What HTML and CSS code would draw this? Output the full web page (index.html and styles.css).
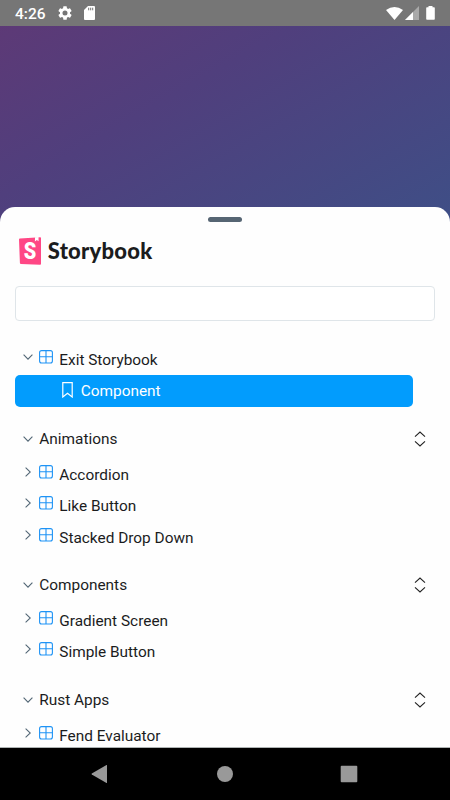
FILE: index.html
```html
<!DOCTYPE html>
<html lang="en">
<head>
    <meta charset="utf-8">
    <title>Storybook</title>
    <link rel="stylesheet" href="styles.css">
</head>
<body>
    <!-- shared icons -->
    <svg class="sprite" width="0" height="0">
        <symbol id="down" viewBox="0 0 10 6"><path d="M.6 .6 5 5.1 9.4 .6"/></symbol>
        <symbol id="right" viewBox="0 0 6 10"><path d="M.6 .6 5.3 5 .6 9.4"/></symbol>
        <symbol id="grid" viewBox="0 0 14 14"><rect x=".6" y=".6" width="12.8" height="12.4" rx="2"/><path d="M7 .6V13M.6 6.7H13.4"/></symbol>
        <symbol id="expand" viewBox="0 0 12 16"><path d="M1 5.7 6 1 11 5.7M1 10.3 6 15 11 10.3"/></symbol>
    </svg>

    <div class="phone">
        <header class="status-bar">
            <span class="clock">4:26</span>
            <svg class="gear" viewBox="2 2 20 20" width="14" height="14"><path d="M19.14 12.94c.04-.3.06-.61.06-.94s-.02-.64-.07-.94l2.03-1.58a.49.49 0 0 0 .12-.61l-1.92-3.32a.49.49 0 0 0-.59-.22l-2.39.96a7 7 0 0 0-1.62-.94l-.36-2.54A.48.48 0 0 0 13.92 2.4h-3.84a.48.48 0 0 0-.47.41l-.36 2.54a7.3 7.3 0 0 0-1.62.94l-2.39-.96a.48.48 0 0 0-.59.22L2.74 8.87a.48.48 0 0 0 .12.61l2.03 1.58a6 6 0 0 0 0 1.88l-2.03 1.58a.49.49 0 0 0-.12.61l1.92 3.32c.12.22.37.29.59.22l2.39-.96c.5.38 1.03.7 1.62.94l.36 2.54c.05.24.24.41.48.41h3.84c.24 0 .44-.17.47-.41l.36-2.54a7 7 0 0 0 1.62-.94l2.39.96c.22.08.47 0 .59-.22l1.92-3.32a.48.48 0 0 0-.12-.61zM12 15.6a3.6 3.6 0 1 1 0-7.2 3.6 3.6 0 0 1 0 7.2z"/></svg>
            <svg class="sd-card" viewBox="0 0 11 14" width="11" height="14"><path d="M4 0h6a1 1 0 0 1 1 1v12a1 1 0 0 1-1 1H1a1 1 0 0 1-1-1V4z"/><path class="pins" d="M4.7 1.7v2.6M6.7 1.7v2.6M8.7 1.7v2.6"/></svg>
            <svg class="wifi" viewBox="0 0 17 13" width="17" height="13"><path d="M0 3Q8.500-3 17 3L8.500 13z"/></svg>
            <svg class="signal" viewBox="0 0 14 14" width="14" height="14"><path class="weak" d="M14 0v14H0z"/><path d="M8 6v8H0z"/></svg>
            <svg class="battery" viewBox="0 0 9 14" width="9" height="14"><path d="M2.500 0h4v1.300H8a.8.8 0 0 1 .8.8V13a.8.8 0 0 1-.8.8H1a.8.8 0 0 1-.8-.8V2.100A.8.8 0 0 1 1 1.300h1.500z"/></svg>
        </header>

        <main class="sheet">
            <div class="handle"></div>
            <div class="brand">
                <svg class="logo" viewBox="0 0 22 28" width="22" height="28">
                    <path class="cover" d="M.9 1.500 21.200.2Q22 .2 22 1V26.800Q22 27.800 21 27.700L2 26.900Q1 26.800.9 25.900L0 2.500Q0 1.600.9 1.500z"/>
                    <path class="ribbon" d="M16 .3 19.500 0 19.600 4.300 17.800 3.100 15.900 4.400z"/>
                    <text class="mark" x="11" y="22" text-anchor="middle" textLength="12.500" lengthAdjust="spacingAndGlyphs">S</text>
                </svg>
                <span class="brand-name">Storybook</span>
            </div>
            <input class="search" type="text">

            <div class="tree">
                <div class="item">
                    <svg class="arrow"><use href="#down" x="0" y="2" width="10" height="6"/></svg>
                    <svg class="grid"><use href="#grid"/></svg>
                    <span>Exit Storybook</span>
                </div>
                <div class="item selected">
                    <svg class="bookmark" viewBox="0 0 11 16" width="11" height="16"><path d="M.8.700H10.200V15L5.500 11.300.8 15z"/></svg>
                    <span>Component</span>
                </div>

                <section class="group">
                    <div class="group-title">
                        <svg class="arrow"><use href="#down" x="0" y="2" width="10" height="6"/></svg>
                        <span>Animations</span>
                        <svg class="expand"><use href="#expand"/></svg>
                    </div>
                    <div class="item">
                        <svg class="arrow"><use href="#right" x="2" y="0" width="6" height="10"/></svg>
                        <svg class="grid"><use href="#grid"/></svg>
                        <span>Accordion</span>
                    </div>
                    <div class="item">
                        <svg class="arrow"><use href="#right" x="2" y="0" width="6" height="10"/></svg>
                        <svg class="grid"><use href="#grid"/></svg>
                        <span>Like Button</span>
                    </div>
                    <div class="item">
                        <svg class="arrow"><use href="#right" x="2" y="0" width="6" height="10"/></svg>
                        <svg class="grid"><use href="#grid"/></svg>
                        <span>Stacked Drop Down</span>
                    </div>
                </section>

                <section class="group">
                    <div class="group-title">
                        <svg class="arrow"><use href="#down" x="0" y="2" width="10" height="6"/></svg>
                        <span>Components</span>
                        <svg class="expand"><use href="#expand"/></svg>
                    </div>
                    <div class="item">
                        <svg class="arrow"><use href="#right" x="2" y="0" width="6" height="10"/></svg>
                        <svg class="grid"><use href="#grid"/></svg>
                        <span>Gradient Screen</span>
                    </div>
                    <div class="item">
                        <svg class="arrow"><use href="#right" x="2" y="0" width="6" height="10"/></svg>
                        <svg class="grid"><use href="#grid"/></svg>
                        <span>Simple Button</span>
                    </div>
                </section>

                <section class="group">
                    <div class="group-title">
                        <svg class="arrow"><use href="#down" x="0" y="2" width="10" height="6"/></svg>
                        <span>Rust Apps</span>
                        <svg class="expand"><use href="#expand"/></svg>
                    </div>
                    <div class="item">
                        <svg class="arrow"><use href="#right" x="2" y="0" width="6" height="10"/></svg>
                        <svg class="grid"><use href="#grid"/></svg>
                        <span>Fend Evaluator</span>
                    </div>
                </section>
            </div>
        </main>

        <nav class="nav-bar">
            <svg viewBox="0 0 18 18" width="18" height="18"><path d="M16 .3V17.700Q16 18.200 15.500 18L.8 9.500Q.3 9 .8 8.500L15.500 0Q16-.2 16 .3z"/></svg>
            <svg viewBox="0 0 18 18" width="18" height="18"><circle cx="9" cy="9" r="8"/></svg>
            <svg viewBox="0 0 18 18" width="18" height="18"><rect x=".7" y=".7" width="16.600" height="16.600" rx="1"/></svg>
        </nav>
    </div>
</body>
</html>
```

FILE: styles.css
```css
* {
    box-sizing: border-box;
}

body {
    margin: 0;
    font-family: Roboto, "Liberation Sans", sans-serif;
    color: #1b1c1d;
}

svg {
    display: block;
    flex: none;
}

.sprite {
    display: none;
}

.phone {
    display: flex;
    flex-direction: column;
    width: 450px;
    height: 800px;
    overflow: hidden;
    background: linear-gradient(150deg, #5e3976 10px, #503f7d 170px, #3f4e86 410px);
}

/* Android status bar */
.status-bar {
    display: flex;
    align-items: center;
    flex: none;
    height: 26px;
    padding: 0 15px 0 15px;
    background: #767676;
    color: #fff;
    fill: #fff;
}

.clock {
    width: 43px;
    padding-top: 2px;
    font-size: 15.500px;
    font-weight: 500;
    line-height: 20px;
}

.sd-card {
    margin-left: 12px;
}

.pins {
    stroke: #767676;
}

.wifi {
    margin-left: auto;
}

.signal {
    margin-left: 2px;
}

.weak {
    fill: #a9a9a9;
}

.battery {
    margin-left: 7px;
}

/* bottom sheet */
.sheet {
    flex: 1;
    min-height: 0;
    margin-top: 180.500px;
    padding: 10px 14.750px 0 15.250px;
    overflow: hidden;
    border-bottom: 1px solid #aeb3b3;
    border-radius: 15px 15px 0 0;
    background: #fefefe;
}

.handle {
    width: 34px;
    height: 5px;
    margin: 0 auto;
    border-radius: 3px;
    background: #566573;
}

.brand {
    display: flex;
    align-items: center;
    height: 28px;
    margin: 15px 0 0 3.500px;
}

.cover {
    fill: #ff4785;
}

.ribbon {
    fill: #fff;
}

.mark {
    fill: #fff;
    font-family: Roboto, sans-serif;
    font-size: 23px;
    font-weight: 900;
}

.brand-name {
    margin-left: 7px;
    font-family: Lato, sans-serif;
    font-size: 22px;
    font-weight: 900;
    line-height: 28px;
    letter-spacing: .25px;
}

.search {
    display: block;
    width: 420px;
    height: 35px;
    margin: 21.800px 0 0;
    border: 1px solid #dfe5e9;
    border-radius: 4px;
    background: #fff;
}

.tree {
    padding-top: 22.800px;
    font-size: 15.400px;
    line-height: 20px;
}

.item {
    display: flex;
    align-items: center;
    width: 398px;
    height: 31.250px;
    padding-left: 8px;
}

.item > span {
    margin-left: 6px;
    padding-top: 1px;
}

.arrow {
    width: 10px;
    height: 10px;
    fill: none;
    stroke: #526675;
    stroke-width: 1.100;
}

.grid {
    width: 14px;
    height: 14px;
    margin-left: 6px;
    fill: none;
    stroke: #1e93f5;
    stroke-width: 1.100;
}

.item .arrow,
.item .grid {
    margin-bottom: 5px;
}

.selected {
    padding-left: 46.500px;
    border-radius: 5px;
    background: #029cfd;
    color: #fff;
}

.selected > span {
    margin-left: 8px;
}

.bookmark {
    margin-bottom: 2px;
    fill: none;
    stroke: #fff;
    stroke-width: 1.200;
}

.group {
    margin-top: 12px;
}

.group-title {
    display: flex;
    align-items: center;
    height: 40.300px;
    padding: 0 9.500px 0 8px;
}

.group-title > span {
    margin-left: 6px;
}

.expand {
    width: 12px;
    height: 16px;
    margin-left: auto;
    fill: none;
    stroke: #222;
    stroke-width: 1.100;
}

/* Android navigation */
.nav-bar {
    display: flex;
    align-items: center;
    justify-content: space-between;
    flex: none;
    height: 52px;
    padding: 0 92px 0 91px;
    background: #000;
    fill: #999;
}
```
